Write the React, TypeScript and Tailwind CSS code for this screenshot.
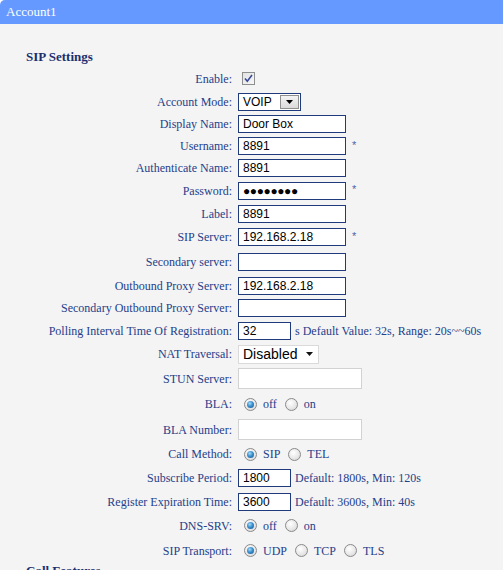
import React from "react";

const serif = "font-['Liberation_Serif','Times_New_Roman',serif]";
const sans = "font-['Liberation_Sans',Arial,sans-serif]";

function Radio({ checked }: { checked?: boolean }) {
  return (
    <span className="relative inline-block w-[13px] h-[13px] shrink-0 rounded-full border border-[#8a8a8a] bg-[radial-gradient(circle_at_40%_35%,#ffffff_0%,#e6e6e6_60%,#cfcfcf_100%)]">
      {checked && (
        <span className="absolute left-[2px] top-[2px] w-[7px] h-[7px] rounded-full bg-[radial-gradient(circle_at_40%_35%,#a8dcf8_0%,#3b8fcf_45%,#164f86_100%)]" />
      )}
    </span>
  );
}

function Checkbox() {
  return (
    <span className="relative inline-block w-[13px] h-[13px] border border-[#8e8f8f] bg-[linear-gradient(135deg,#e2e2e2,#f7f7f7)] ml-[4px]">
      <svg viewBox="0 0 11 11" className="absolute left-0 top-0 w-[11px] h-[11px]">
        <path d="M2 5.5 L4.3 8.3 L9 2" fill="none" stroke="#3a4a9a" strokeWidth="1.6" />
      </svg>
    </span>
  );
}

function TextBox({ value, w = 108, pw = false }: { value?: string; w?: number; pw?: boolean }) {
  return (
    <div
      className={`h-[18px] border border-[#1f3b7c] bg-white flex items-center pl-[4px] text-[12px] text-black ${sans} leading-none overflow-hidden`}
      style={{ width: w }}
    >
      {pw ? <span className="tracking-[-0.4px] text-[12px]">●●●●●●●●</span> : value}
    </div>
  );
}

function LightBox() {
  return <div className="w-[124px] h-[21px] border border-[#d2d2d2] bg-white" />;
}

function Star() {
  return <span className={`ml-[6px] text-[#4b64ab] text-[11px] ${sans} -mt-[2px]`}>*</span>;
}

function Row({ label, h, children }: { label: string; h: number; children?: React.ReactNode }) {
  return (
    <div className="flex items-center" style={{ height: h }}>
      <div className="w-[232px] shrink-0 text-right text-[12px] text-[#25408a] leading-none whitespace-nowrap">{label}</div>
      <div className="ml-[6px] flex items-center">{children}</div>
    </div>
  );
}

function Note({ children }: { children: React.ReactNode }) {
  return <span className="ml-[4px] text-[12px] text-[#25408a] whitespace-nowrap">{children}</span>;
}

function RadioGroup({ items, checked }: { items: string[]; checked: number }) {
  return (
    <div className="flex items-center ml-[6px] text-[12px] text-[#25408a]">
      {items.map((it, i) => (
        <span key={it} className={`flex items-center ${i > 0 ? "ml-[8px]" : ""}`}>
          <Radio checked={i === checked} />
          <span className="ml-[6px]">{it}</span>
        </span>
      ))}
    </div>
  );
}

export default function App() {
  return (
    <div className={`w-[503px] h-[570px] overflow-hidden bg-[#f4f4f4] ${serif}`}>
      <div className="bg-white">
        <div className="h-[24px] bg-[#6699ff] rounded-tl-[5px] pl-[6px] flex items-center text-white text-[13px]">
          Account1
        </div>
      </div>
      <div className="h-[43px] pt-[26px] pl-[26px] text-[13px] font-bold text-[#1b2f6e] leading-[14px]">SIP Settings</div>

      <Row label="Enable:" h={23}>
        <Checkbox />
      </Row>
      <Row label="Account Mode:" h={23}>
        <div className={`w-[63px] h-[18px] border border-[#1f3b7c] bg-white flex items-center justify-between pl-[4px] pr-[1px] text-[12px] text-black ${sans}`}>
          <span>VOIP</span>
          <span className="w-[19px] h-[14px] border border-[#8f8f8f] bg-[linear-gradient(#f4f4f4,#dadada)] flex items-center justify-center">
            <svg width="7" height="4" viewBox="0 0 7 4">
              <path d="M0 0 H7 L3.5 4 Z" fill="#000" />
            </svg>
          </span>
        </div>
      </Row>
      <Row label="Display Name:" h={22}>
        <TextBox value="Door Box" />
      </Row>
      <Row label="Username:" h={22}>
        <TextBox value="8891" />
        <Star />
      </Row>
      <Row label="Authenticate Name:" h={22}>
        <TextBox value="8891" />
      </Row>
      <Row label="Password:" h={23}>
        <TextBox pw />
        <Star />
      </Row>
      <Row label="Label:" h={23}>
        <TextBox value="8891" />
      </Row>
      <Row label="SIP Server:" h={24}>
        <TextBox value="192.168.2.18" />
        <Star />
      </Row>
      <Row label="Secondary server:" h={25}>
        <TextBox />
      </Row>
      <Row label="Outbound Proxy Server:" h={23}>
        <TextBox value="192.168.2.18" />
      </Row>
      <Row label="Secondary Outbound Proxy Server:" h={22}>
        <TextBox />
      </Row>
      <Row label="Polling Interval Time Of Registration:" h={23}>
        <TextBox value="32" w={53} />
        <Note>s Default Value: 32s, Range: 20s~~60s</Note>
      </Row>
      <Row label="NAT Traversal:" h={24}>
        <div className={`w-[81px] h-[19px] border border-[#dadada] bg-white flex items-center justify-between pl-[4px] pr-[5px] text-[14px] text-black ${sans}`}>
          <span>Disabled</span>
          <svg width="7" height="4" viewBox="0 0 7 4">
            <path d="M0 0 H7 L3.5 4 Z" fill="#111" />
          </svg>
        </div>
      </Row>
      <Row label="STUN Server:" h={25}>
        <LightBox />
      </Row>
      <Row label="BLA:" h={26}>
        <RadioGroup items={["off", "on"]} checked={0} />
      </Row>
      <Row label="BLA Number:" h={25}>
        <LightBox />
      </Row>
      <Row label="Call Method:" h={24}>
        <RadioGroup items={["SIP", "TEL"]} checked={0} />
      </Row>
      <Row label="Subscribe Period:" h={24}>
        <TextBox value="1800" w={53} />
        <Note>Default: 1800s, Min: 120s</Note>
      </Row>
      <Row label="Register Expiration Time:" h={23}>
        <TextBox value="3600" w={53} />
        <Note>Default: 3600s, Min: 40s</Note>
      </Row>
      <Row label="DNS-SRV:" h={25}>
        <RadioGroup items={["off", "on"]} checked={0} />
      </Row>
      <Row label="SIP Transport:" h={25}>
        <RadioGroup items={["UDP", "TCP", "TLS"]} checked={0} />
      </Row>
      <div className="pt-[1px] pl-[26px] text-[13px] font-bold text-[#1b2f6e] leading-[14px]">Call Features</div>
    </div>
  );
}
